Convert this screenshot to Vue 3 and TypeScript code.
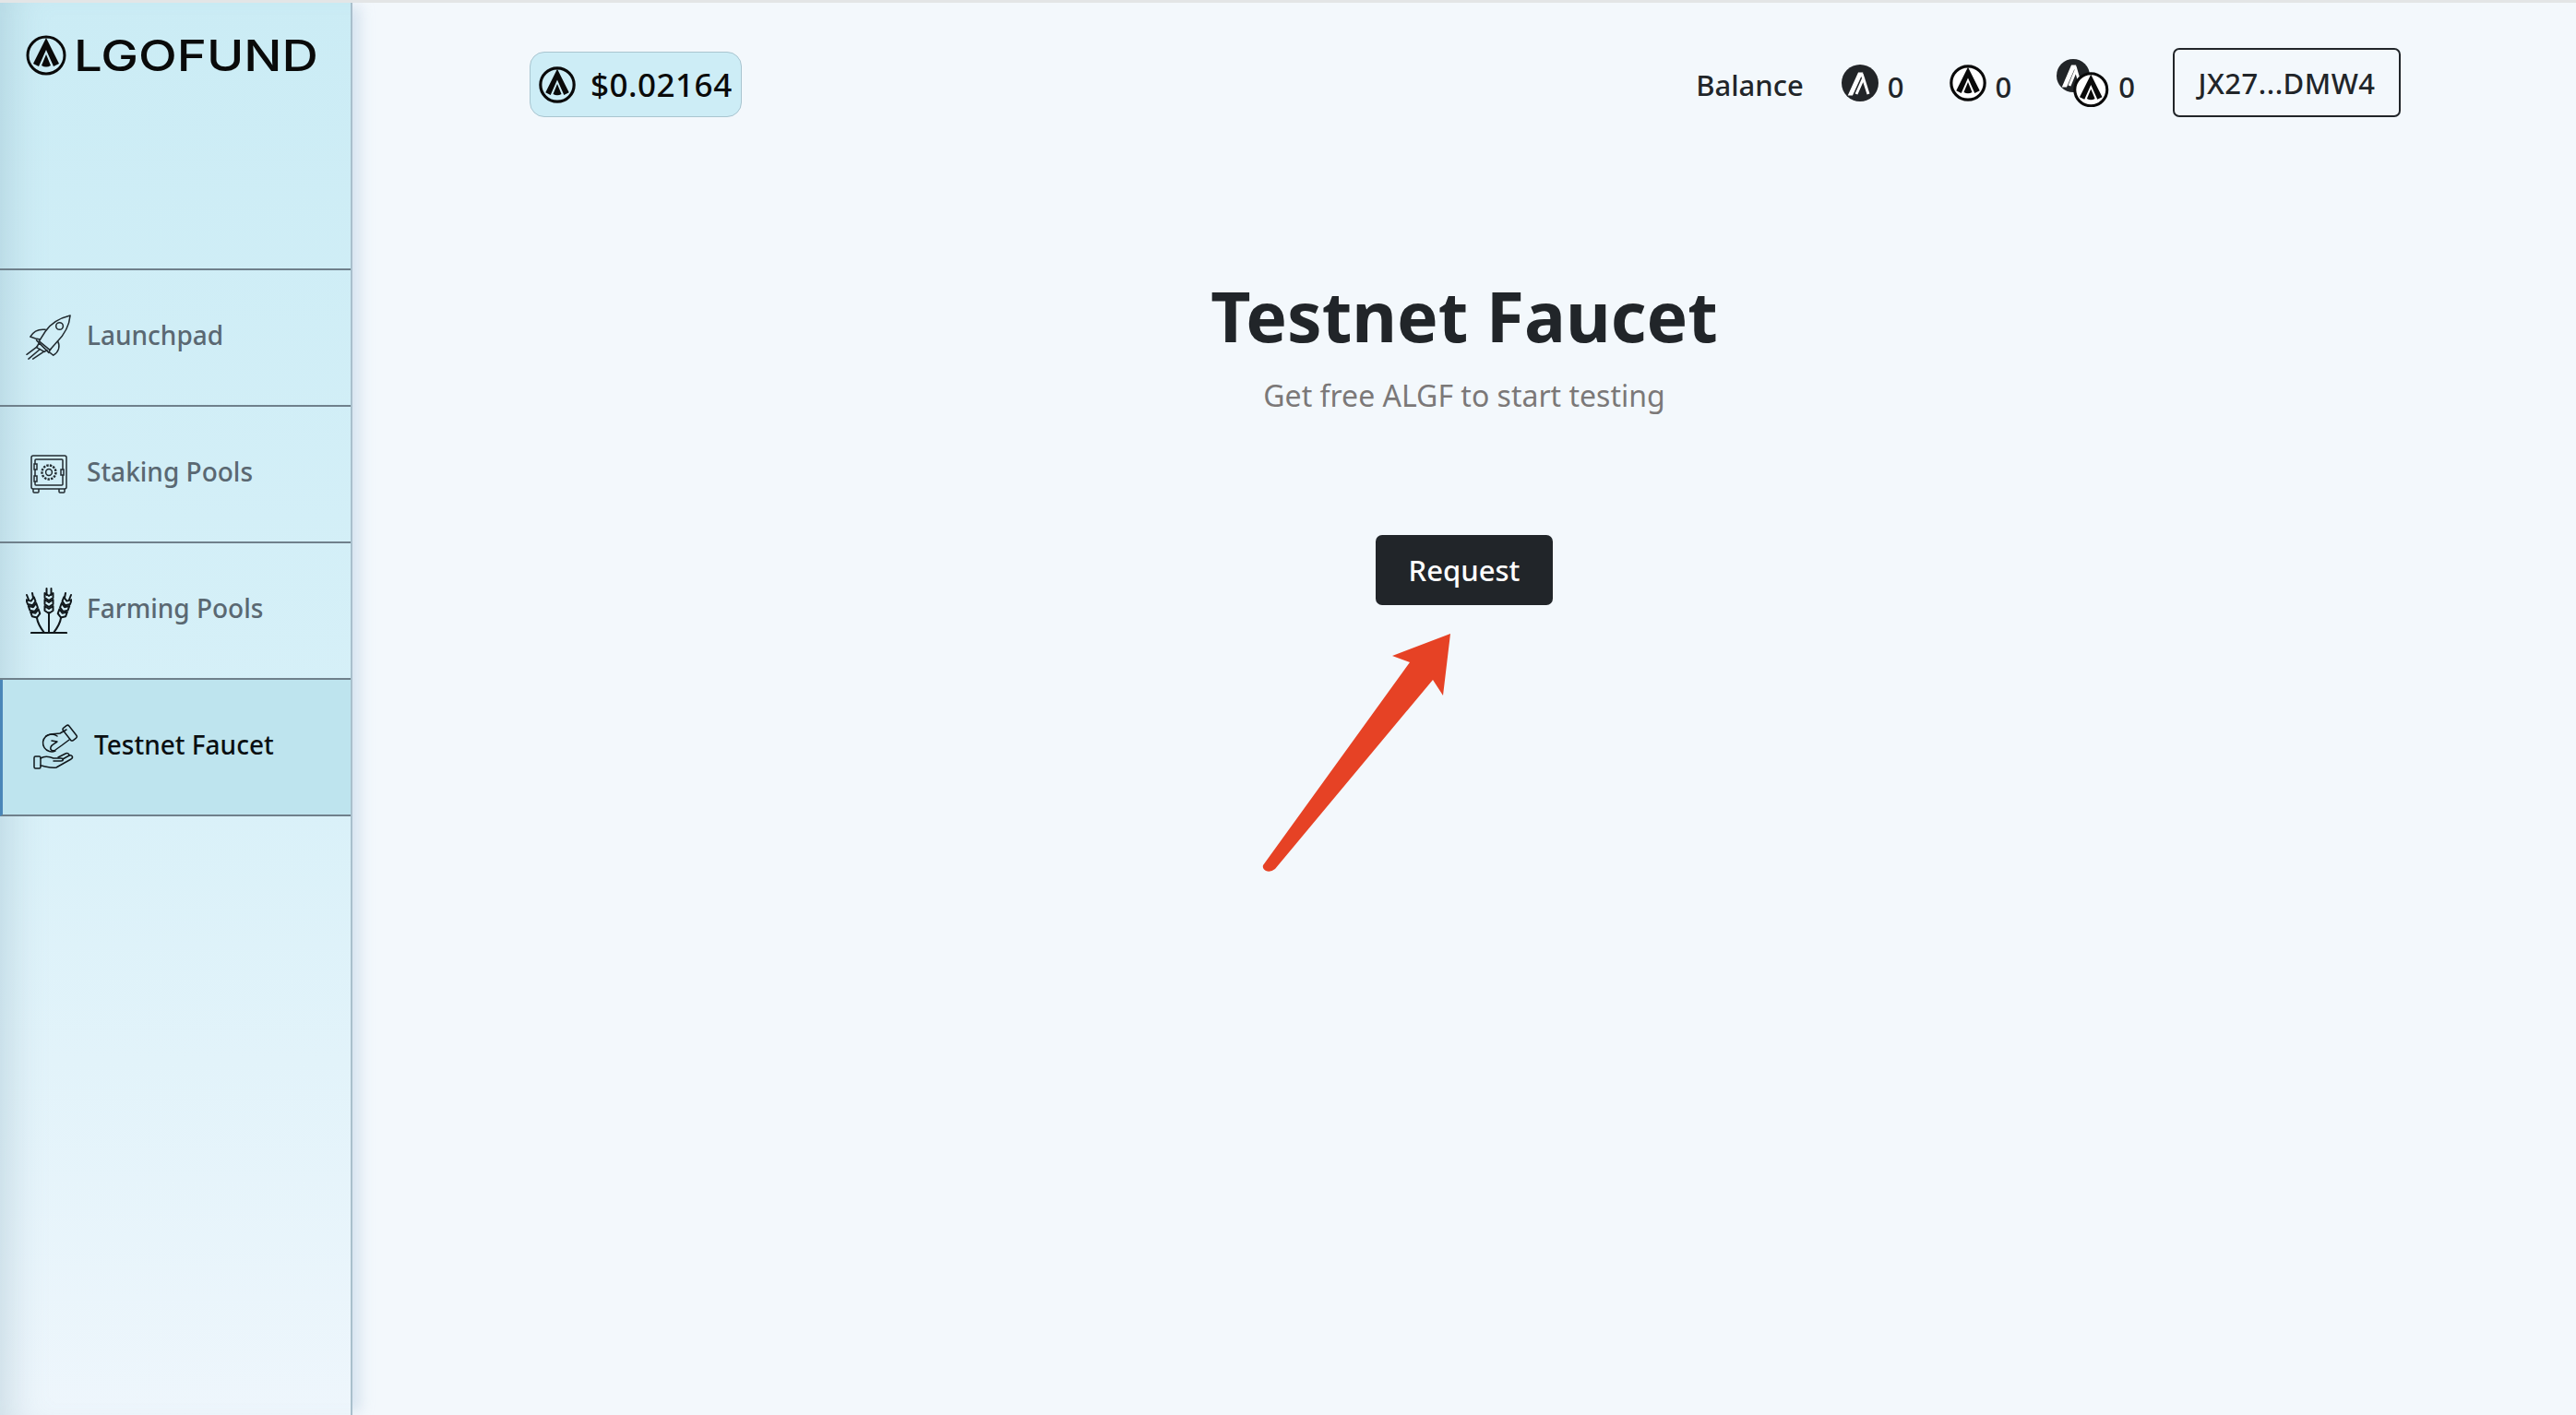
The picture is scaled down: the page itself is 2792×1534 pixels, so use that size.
<script setup lang="ts">
interface NavItem {
  label: string
  icon: 'rocket' | 'safe' | 'wheat' | 'hand'
  active?: boolean
}

const navItems: NavItem[] = [
  { label: 'Launchpad', icon: 'rocket' },
  { label: 'Staking Pools', icon: 'safe' },
  { label: 'Farming Pools', icon: 'wheat' },
  { label: 'Testnet Faucet', icon: 'hand', active: true },
]

// position of the three wheat ears
const ears = [
  { x: 9, y: 24, angle: -20 },
  { x: 41, y: 24, angle: 20 },
  { x: 25, y: 19, angle: 0 },
]
</script>

<template>
  <div class="page">
    <aside class="sidebar">
      <div class="brand">
        <svg class="logo-mark" viewBox="0 0 44 44">
          <circle cx="22" cy="22" r="20" fill="none" stroke="#0a0a0a" stroke-width="3" />
          <path d="M22 3 L36 31 L30 34 L22 16 L14 34 L8 31 Z" fill="#0a0a0a" />
          <path d="M22 21 L27 33 Q22 36 17 33 Z" fill="#0a0a0a" />
        </svg>
        <span class="wordmark">LGOFUND</span>
      </div>
      <nav>
        <a v-for="item in navItems" :key="item.label" class="nav-item" :class="{ active: item.active }">
          <span class="nav-icon">
            <svg v-if="item.icon === 'rocket'" width="52" height="52" viewBox="0 0 52 52" fill="none" stroke="#222b30" stroke-width="1.6" stroke-linejoin="round" stroke-linecap="round">
              <path d="M50 1 C38 4 28 10 22 19 L15 30 L27 40 L35 31 C44 22 49 12 50 1 Z" />
              <circle cx="38" cy="13" r="4" />
              <path d="M22 17 C14 16 8 20 5 25 L11 27 L16 28" />
              <path d="M36 30 C39 36 37 42 31 46 L26 42 L28 39" />
              <path d="M12 29 L26 43 M15 32 L12 37 L21 42 L24 40" />
              <path d="M13 36 L1 45 M16 39 L3 50 M20 42 L8 50" />
            </svg>
            <svg v-else-if="item.icon === 'safe'" width="40" height="42" viewBox="0 0 40 42" fill="none" stroke="#222b30" stroke-width="1.5">
              <rect x="1" y="1" width="38" height="36" rx="2" />
              <rect x="5" y="5" width="30" height="28" rx="1" />
              <circle cx="20" cy="19" r="7.5" stroke-width="2.4" stroke-dasharray="2.4 1.2" />
              <circle cx="20" cy="19" r="3.4" />
              <path d="M4 10 h3 v6 h-3 z M4 23 h3 v6 h-3 z M33 16 h3 v6 h-3 z" fill="#d2eef7" />
              <path d="M3 37 v3 q0 1 1 1 h4 q1 0 1 -1 v-3 M31 37 v3 q0 1 1 1 h4 q1 0 1 -1 v-3" />
            </svg>
            <svg v-else-if="item.icon === 'wheat'" width="50" height="50" viewBox="0 0 50 50" fill="none" stroke="#11181c" stroke-width="2" stroke-linecap="round" stroke-linejoin="round">
              <path d="M25 49 V27 M12 33 C13 40 17 45 20 49 M38 33 C37 40 33 45 30 49" />
              <path d="M22.5 8 V1 M27.5 8 V1 M3 13 L1 8 M8 11 L7 6 M47 13 L49 8 M42 11 L43 6" />
              <g v-for="ear in ears" :key="ear.x" :transform="`translate(${ear.x} ${ear.y}) rotate(${ear.angle})`">
                <path d="M0 -5 L-4.5 -8 V-13 L0 -10 L4.5 -13 V-8 Z" />
                <path d="M0 2 L-4.5 -1 V-6 L0 -3 L4.5 -6 V-1 Z" />
                <path d="M0 9 L-4.5 6 V1 L0 4 L4.5 1 V6 Z" />
              </g>
              <path d="M6 49 H44" stroke-width="2.2" />
            </svg>
            <svg v-else width="50" height="50" viewBox="0 0 50 50" fill="none" stroke="#11181c" stroke-width="1.5" stroke-linecap="round" stroke-linejoin="round">
              <path d="M26 13 A9.5 9.5 0 1 0 24 29" />
              <path d="M14 13 C19 10 24 11 29 10 L36 6 M39 17 L31 23 L24 28 C21 30 18 28 19 25 C20 22 24 21 26 19 L20 18" />
              <rect x="36" y="1" width="8" height="17" rx="2" transform="rotate(-38 40 10)" />
              <rect x="1" y="35" width="7" height="13" rx="1.5" />
              <path d="M8 37 C13 34 17 35 22 37 L30 37 C33 37 33 40 30 40 L22 40" />
              <path d="M8 45 C14 46 20 48 25 47 L41 38 C44 36 42 33 39 34 L32 38" />
              <path d="M27 36 L35 32 C37 31 39 32 39 34" />
            </svg>
          </span>
          <span class="nav-label">{{ item.label }}</span>
        </a>
      </nav>
    </aside>

    <main class="main">
      <header class="topbar">
        <div class="price">
          <svg class="coin" viewBox="0 0 44 44">
            <circle cx="22" cy="22" r="20" fill="none" stroke="#0a0a0a" stroke-width="3.5" />
            <path d="M22 3 L36 31 L30 34 L22 16 L14 34 L8 31 Z" fill="#0a0a0a" />
            <path d="M22 21 L27 33 Q22 36 17 33 Z" fill="#0a0a0a" />
          </svg>
          <span>$0.02164</span>
        </div>
        <div class="account">
          <span class="balance-label">Balance</span>
          <div class="balance first">
            <svg class="coin" viewBox="0 0 40 40">
              <circle cx="20" cy="20" r="20" fill="#222528" />
              <path d="M9 32 L19 10 L21 10 L11 32 Z M16 32 L24 14 M22 10 L29 32" fill="#fff" stroke="#fff" stroke-width="3" />
            </svg>
            <span>0</span>
          </div>
          <div class="balance">
            <svg class="coin" viewBox="0 0 44 44">
              <circle cx="22" cy="22" r="20" fill="#fff" stroke="#0a0a0a" stroke-width="3.5" />
              <path d="M22 3 L36 31 L30 34 L22 16 L14 34 L8 31 Z" fill="#0a0a0a" />
              <path d="M22 21 L27 33 Q22 36 17 33 Z" fill="#0a0a0a" />
            </svg>
            <span>0</span>
          </div>
          <div class="balance">
            <svg class="coin-pair" width="57" height="52" viewBox="0 0 57 52">
              <circle cx="18" cy="18" r="18" fill="#222528" />
              <path d="M8 29 L17 8 L19 8 L10 29 Z M14 29 L21 12 M20 8 L26 29" fill="#fff" stroke="#fff" stroke-width="3" />
              <g transform="translate(18 14) scale(0.875)">
                <circle cx="22" cy="22" r="20" fill="#fff" stroke="#0a0a0a" stroke-width="3.5" />
                <path d="M22 3 L36 31 L30 34 L22 16 L14 34 L8 31 Z" fill="#0a0a0a" />
                <path d="M22 21 L27 33 Q22 36 17 33 Z" fill="#0a0a0a" />
              </g>
            </svg>
            <span>0</span>
          </div>
          <button class="wallet">JX27...DMW4</button>
        </div>
      </header>

      <section class="faucet">
        <h1>Testnet Faucet</h1>
        <p>Get free ALGF to start testing</p>
        <button class="request">Request</button>
      </section>

      <!-- annotation drawn over the page -->
      <svg class="arrow" width="220" height="270" viewBox="0 0 220 270">
        <path d="M212 7 L149 31 L168 38 L9 258 Q8 262 12 264 Q17 266 22 262 L193 57 L204 74 Z" fill="#e64225" />
      </svg>
    </main>
  </div>
</template>

<style scoped>
.page {
  display: flex;
  height: 1534px;
  box-sizing: border-box;
  border-top: 3px solid #e3e5e6;
  background: #f3f8fc;
  font-family: 'Noto Sans', 'Open Sans', sans-serif;
  color: #212529;
  overflow: hidden;
}

.sidebar {
  width: 382px;
  flex-shrink: 0;
  box-sizing: border-box;
  border-right: 2px solid #a9bfcc;
  background: linear-gradient(180deg, #cbecf5 0%, #d6f0f8 50%, #eef6fc 100%);
  box-shadow: 12px 0 14px -4px rgba(170, 195, 220, 0.4), inset 40px 0 40px -30px rgba(120, 160, 175, 0.3);
  position: relative;
}

.brand {
  height: 290px;
  box-sizing: border-box;
  border-bottom: 2px solid #6f808b;
  display: flex;
  align-items: flex-start;
  padding: 35px 0 0 28px;
  gap: 8px;
}

.logo-mark {
  width: 44px;
  height: 44px;
}

/* the wordmark in the logo is much wider than any installed face */
.wordmark {
  font-family: Inter, sans-serif;
  font-size: 47px;
  line-height: 44px;
  font-weight: 500;
  color: #0a0a0a;
  letter-spacing: 0;
  transform: scaleX(1.16);
  transform-origin: left center;
}

.nav-item {
  height: 148px;
  box-sizing: border-box;
  border-bottom: 2px solid #6f808b;
  display: flex;
  align-items: center;
  gap: 16px;
  padding-left: 28px;
  color: #5a6872;
  font-size: 28px;
  font-weight: 500;
}

.nav-label {
  padding-bottom: 6px;
}

.nav-item.active {
  background: #bee4ee;
  border-left: 3px solid #4a86b8;
  padding-left: 33px;
  color: #0a0f12;
}

.nav-icon {
  width: 50px;
  display: flex;
  justify-content: center;
  align-items: center;
}

.main {
  flex: 1;
  position: relative;
}

.topbar {
  display: flex;
  justify-content: space-between;
  align-items: flex-start;
  padding: 49px 190px 0 192px;
}

.price {
  margin-top: 4px;
  height: 71px;
  width: 230px;
  box-sizing: border-box;
  display: flex;
  align-items: center;
  gap: 16px;
  padding-left: 9px;
  background: #cdedf6;
  border: 1px solid #a9c5d0;
  border-radius: 16px;
  font-size: 35px;
  letter-spacing: 0.5px;
  font-weight: 500;
  color: #0a0a0a;
}

.coin {
  width: 40px;
  height: 40px;
}

.account {
  display: flex;
  align-items: center;
  gap: 41px;
}

.balance-label,
.balance {
  font-size: 31px;
  font-weight: 500;
  color: #212529;
}

.balance {
  display: flex;
  align-items: center;
  gap: 10px;
  margin-left: 8px;
}

.balance.first {
  margin-left: 0;
}

.balance span {
  padding-top: 8px;
}

.balance-label {
  padding-top: 5px;
}

.wallet {
  width: 247px;
  height: 75px;
  box-sizing: border-box;
  background: transparent;
  border: 2px solid #212529;
  border-radius: 7px;
  font-family: inherit;
  font-size: 31px;
  letter-spacing: 0.5px;
  font-weight: 500;
  color: #212529;
}

.faucet {
  display: flex;
  flex-direction: column;
  align-items: center;
  margin-top: 170px;
}

h1 {
  margin: 0;
  font-size: 75px;
  line-height: 90px;
  font-weight: 700;
  color: #212529;
}

p {
  margin: 22px 0 0;
  font-size: 32px;
  line-height: 40px;
  color: #7b7878;
}

.request {
  margin-top: 131px;
  width: 192px;
  height: 76px;
  background: #212529;
  border: none;
  border-radius: 7px;
  font-family: inherit;
  font-size: 31px;
  font-weight: 500;
  color: #fff;
}

.arrow {
  position: absolute;
  left: 978px;
  top: 677px;
}
</style>

<style>
body {
  margin: 0;
  background: #f3f8fc;
}
</style>
